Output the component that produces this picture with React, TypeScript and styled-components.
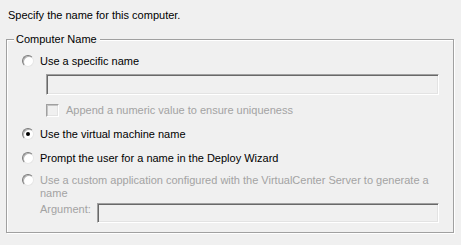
import React from 'react';
import styled, { createGlobalStyle } from 'styled-components';

const GlobalStyle = createGlobalStyle`
    html, body {
        margin: 0;
        padding: 0;
        background: #f0f0f0;
    }

    body {
        font-family: 'Liberation Sans', Arial, sans-serif;
        font-size: 11px;
        line-height: 13px;
        color: #000;
    }
`;

const Page = styled.div`
    width: 461px;
    height: 245px;
    padding-top: 9px;
    box-sizing: border-box;
`;

const Intro = styled.div`
    padding-left: 8px;
`;

const GroupBox = styled.fieldset`
    box-sizing: border-box;
    width: 448px;
    margin: 11px 0 0 6px;
    padding: 0;
    border: 1px solid #a0a0a0;
    box-shadow: 1px 1px 0 #fff, inset 1px 1px 0 #fff;
    min-width: 0;
`;

const Legend = styled.legend`
    margin-left: 7px;
    padding: 0 3px 0 2px;
    background: #f0f0f0;
    line-height: 13px;
`;

const GroupBody = styled.div`
    padding: 9px 14px 9px 15px;
`;

const OptionRow = styled.label<{ $disabled?: boolean; $gap?: number }>`
    display: flex;
    align-items: flex-start;
    gap: 6px;
    margin-top: ${(p) => p.$gap ?? 0}px;
    color: ${(p) => (p.$disabled ? '#a3a3a3' : '#000')};
`;

const RadioDot = styled.span<{ $checked?: boolean }>`
    position: relative;
    flex: none;
    width: 12px;
    height: 12px;
    box-sizing: border-box;
    border-radius: 50%;
    border: 1px solid;
    border-color: #7a7a7a #e6e6e6 #e6e6e6 #7a7a7a;
    background: #fff;
    box-shadow: inset 1px 1px 0 #b4b4b4;

    &::after {
        content: '';
        display: ${(p) => (p.$checked ? 'block' : 'none')};
        position: absolute;
        left: 3px;
        top: 3px;
        width: 4px;
        height: 4px;
        border-radius: 50%;
        background: #000;
    }
`;

const Indented = styled.div<{ $gap?: number }>`
    padding-left: 24px;
    margin-top: ${(p) => p.$gap ?? 0}px;
`;

const TextField = styled.div`
    box-sizing: border-box;
    height: 21px;
    border: 1px solid;
    border-color: #a0a0a0 #fff #fff #a0a0a0;
    box-shadow: inset 1px 1px 0 #696969, inset -1px -1px 0 #e3e3e3;
    background: #f0f0f0;
`;

const CheckRow = styled.label`
    display: flex;
    align-items: center;
    gap: 7px;
    color: #a3a3a3;
`;

const CheckBox = styled.span`
    flex: none;
    width: 13px;
    height: 13px;
    box-sizing: border-box;
    border: 1px solid;
    border-color: #a0a0a0 #fff #fff #a0a0a0;
    box-shadow: inset 1px 1px 0 #c4c4c4, inset -1px -1px 0 #e3e3e3;
    background: #f0f0f0;
`;

const ArgumentRow = styled.div`
    display: flex;
    align-items: flex-start;
    gap: 6px;
    margin-top: 3px;
    padding-left: 18px;
    color: #a3a3a3;
`;

const ArgumentField = styled(TextField)`
    flex: 1;
    height: 20px;
`;

const App = () => {
    return (
        <Page>
            <GlobalStyle />
            <Intro>Specify the name for this computer.</Intro>

            <GroupBox>
                <Legend>Computer Name</Legend>

                <GroupBody>
                    <OptionRow>
                        <RadioDot />
                        Use a specific name
                    </OptionRow>

                    <Indented $gap={6}>
                        <TextField />
                    </Indented>

                    <Indented $gap={9}>
                        <CheckRow>
                            <CheckBox />
                            Append a numeric value to ensure uniqueness
                        </CheckRow>
                    </Indented>

                    <OptionRow $gap={11}>
                        <RadioDot $checked />
                        Use the virtual machine name
                    </OptionRow>

                    <OptionRow $gap={11}>
                        <RadioDot />
                        Prompt the user for a name in the Deploy Wizard
                    </OptionRow>

                    <OptionRow $gap={9} $disabled>
                        <RadioDot />
                        <span>
                            Use a custom application configured with the VirtualCenter Server to generate a
                            <br />
                            name
                        </span>
                    </OptionRow>

                    <ArgumentRow>
                        Argument:
                        <ArgumentField />
                    </ArgumentRow>
                </GroupBody>
            </GroupBox>
        </Page>
    );
};

export default App;
